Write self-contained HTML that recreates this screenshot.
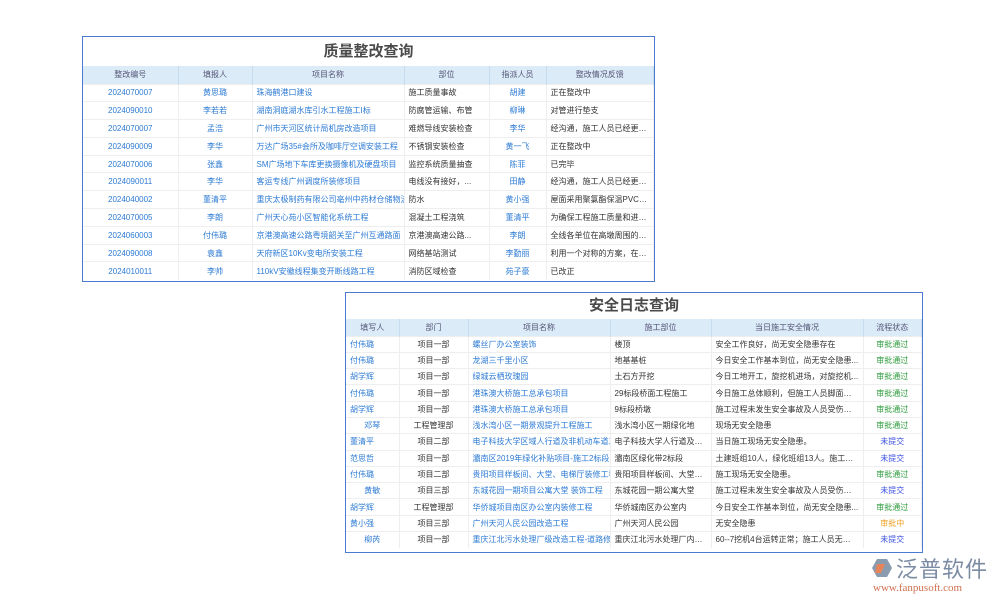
<!DOCTYPE html><html><head><meta charset="utf-8"><style>
body{margin:0;width:1000px;height:600px;background:#fff;position:relative;overflow:hidden;font-family:"Liberation Sans","Noto Sans CJK SC",sans-serif;}
.p{position:absolute;border:1px solid #4a7bd0;background:#fff;box-sizing:border-box;}
.t{text-align:center;font-weight:bold;color:#4a4a4a;font-size:15px;}
table{border-collapse:collapse;table-layout:fixed;width:100%;font-size:8px;}
th{background:#dcebf8;color:#557;font-weight:normal;border-right:1px solid #c8dcef;}
td{border-right:1px solid #eee;border-top:1px solid #eee;white-space:nowrap;overflow:hidden;color:#333;padding:0 4px;}
td.e{text-overflow:ellipsis}
td.c{text-align:center}
.b{color:#2d7bd4}.g{color:#2a9a3a}.u{color:#3b50e0}.o{color:#f0a020}
</style></head><body>
<div class="p" style="left:82px;top:36px;width:573px;height:246px;">
<div class="t" style="height:29px;line-height:29px;">质量整改查询</div>
<table><colgroup><col style="width:95px"><col style="width:74px"><col style="width:152px"><col style="width:85px"><col style="width:57px"><col></colgroup>
<tr style="height:18px"><th>整改编号</th><th>填报人</th><th>项目名称</th><th>部位</th><th>指派人员</th><th>整改情况反馈</th></tr>
<tr style="height:17.8px"><td class="c b">2024070007</td><td class="c b">黄思璐</td><td class="b">珠海鹤港口建设</td><td>施工质量事故</td><td class="c b">胡建</td><td class="e">正在整改中</td></tr>
<tr style="height:17.8px"><td class="c b">2024090010</td><td class="c b">李若若</td><td class="b">湖南洞庭湖水库引水工程施工I标</td><td>防腐管运输、布管</td><td class="c b">柳琳</td><td class="e">对管进行垫支</td></tr>
<tr style="height:17.8px"><td class="c b">2024070007</td><td class="c b">孟浩</td><td class="b">广州市天河区统计局机房改造项目</td><td>难燃导线安装检查</td><td class="c b">李华</td><td class="e">经沟通，施工人员已经更换...</td></tr>
<tr style="height:17.8px"><td class="c b">2024090009</td><td class="c b">李华</td><td class="b">万达广场35#会所及咖啡厅空调安装工程</td><td>不锈钢安装检查</td><td class="c b">黄一飞</td><td class="e">正在整改中</td></tr>
<tr style="height:17.8px"><td class="c b">2024070006</td><td class="c b">张鑫</td><td class="b">SM广场地下车库更换摄像机及硬盘项目</td><td>监控系统质量抽查</td><td class="c b">陈菲</td><td class="e">已完毕</td></tr>
<tr style="height:17.8px"><td class="c b">2024090011</td><td class="c b">李华</td><td class="b">客运专线广州调度所装修项目</td><td>电线没有接好，...</td><td class="c b">田静</td><td class="e">经沟通，施工人员已经更换...</td></tr>
<tr style="height:17.8px"><td class="c b">2024040002</td><td class="c b">董清平</td><td class="b">重庆太极制药有限公司亳州中药材仓储物流</td><td>防水</td><td class="c b">黄小强</td><td class="e">屋面采用聚氯酯保温PVC卷...</td></tr>
<tr style="height:17.8px"><td class="c b">2024070005</td><td class="c b">李朗</td><td class="b">广州天心苑小区智能化系统工程</td><td>混凝土工程浇筑</td><td class="c b">董清平</td><td class="e">为确保工程施工质量和进度...</td></tr>
<tr style="height:17.8px"><td class="c b">2024060003</td><td class="c b">付伟璐</td><td class="b">京港澳高速公路粤境韶关至广州互通路面</td><td>京港澳高速公路...</td><td class="c b">李朗</td><td class="e">全线各单位在高墩周围的模...</td></tr>
<tr style="height:17.8px"><td class="c b">2024090008</td><td class="c b">袁鑫</td><td class="b">天府新区10Kv变电所安装工程</td><td>网络基站测试</td><td class="c b">李勤丽</td><td class="e">利用一个对称的方案，在数...</td></tr>
<tr style="height:17.8px"><td class="c b">2024010011</td><td class="c b">李帅</td><td class="b">110kV安徽线程集变开断线路工程</td><td>消防区域检查</td><td class="c b">苑子豪</td><td class="e">已改正</td></tr>
</table></div>

<div class="p" style="left:345px;top:292px;width:578px;height:261px;">
<div class="t" style="height:26px;line-height:26px;">安全日志查询</div>
<table><colgroup><col style="width:53px"><col style="width:69px"><col style="width:142px"><col style="width:101px"><col style="width:152px"><col></colgroup>
<tr style="height:17px"><th>填写人</th><th>部门</th><th>项目名称</th><th>施工部位</th><th>当日施工安全情况</th><th>流程状态</th></tr>
<tr style="height:16.3px"><td class="b">付伟璐</td><td class="c">项目一部</td><td class="b">螺丝厂办公室装饰</td><td class="e">楼顶</td><td class="e">安全工作良好，尚无安全隐患存在</td><td class="c g">审批通过</td></tr>
<tr style="height:16.3px"><td class="b">付伟璐</td><td class="c">项目一部</td><td class="b">龙湖三千里小区</td><td class="e">地基基桩</td><td class="e">今日安全工作基本到位，尚无安全隐患...</td><td class="c g">审批通过</td></tr>
<tr style="height:16.3px"><td class="b">胡学辉</td><td class="c">项目一部</td><td class="b">绿城云栖玫瑰园</td><td class="e">土石方开挖</td><td class="e">今日工地开工，旋挖机进场，对旋挖机...</td><td class="c g">审批通过</td></tr>
<tr style="height:16.3px"><td class="b">付伟璐</td><td class="c">项目一部</td><td class="b">港珠澳大桥施工总承包项目</td><td class="e">29标段桥面工程施工</td><td class="e">今日施工总体顺利，但施工人员脚面烫伤</td><td class="c g">审批通过</td></tr>
<tr style="height:16.3px"><td class="b">胡学辉</td><td class="c">项目一部</td><td class="b">港珠澳大桥施工总承包项目</td><td class="e">9标段桥墩</td><td class="e">施工过程未发生安全事故及人员受伤情况</td><td class="c g">审批通过</td></tr>
<tr style="height:16.3px"><td class="c b">邓琴</td><td class="c">工程管理部</td><td class="b">浅水湾小区一期景观提升工程施工</td><td class="e">浅水湾小区一期绿化地</td><td class="e">现场无安全隐患</td><td class="c g">审批通过</td></tr>
<tr style="height:16.3px"><td class="b">董清平</td><td class="c">项目二部</td><td class="b">电子科技大学区域人行道及非机动车道工程</td><td class="e">电子科技大学人行道及非...</td><td class="e">当日施工现场无安全隐患。</td><td class="c u">未提交</td></tr>
<tr style="height:16.3px"><td class="b">范思哲</td><td class="c">项目一部</td><td class="b">灞南区2019年绿化补贴项目-施工2标段</td><td class="e">灞南区绿化带2标段</td><td class="e">土建班组10人，绿化班组13人。施工现...</td><td class="c u">未提交</td></tr>
<tr style="height:16.3px"><td class="b">付伟璐</td><td class="c">项目二部</td><td class="b">贵阳项目样板间、大堂、电梯厅装修工程</td><td class="e">贵阳项目样板间、大堂、...</td><td class="e">施工现场无安全隐患。</td><td class="c g">审批通过</td></tr>
<tr style="height:16.3px"><td class="c b">黄敏</td><td class="c">项目三部</td><td class="b">东城花园一期项目公寓大堂 装饰工程</td><td class="e">东城花园一期公寓大堂</td><td class="e">施工过程未发生安全事故及人员受伤情况</td><td class="c u">未提交</td></tr>
<tr style="height:16.3px"><td class="b">胡学辉</td><td class="c">工程管理部</td><td class="b">华侨城项目南区办公室内装修工程</td><td class="e">华侨城南区办公室内</td><td class="e">今日安全工作基本到位，尚无安全隐患...</td><td class="c g">审批通过</td></tr>
<tr style="height:16.3px"><td class="b">黄小强</td><td class="c">项目三部</td><td class="b">广州天河人民公园改造工程</td><td class="e">广州天河人民公园</td><td class="e">无安全隐患</td><td class="c o">审批中</td></tr>
<tr style="height:16.3px"><td class="c b">柳芮</td><td class="c">项目一部</td><td class="b">重庆江北污水处理厂级改造工程-道路修复</td><td class="e">重庆江北污水处理厂内部...</td><td class="e">60--7挖机4台运转正常；施工人员无违章...</td><td class="c u">未提交</td></tr>
</table></div>

<div style="position:absolute;left:871px;top:558px;width:22px;height:20px;">
<svg width="22" height="20" viewBox="0 0 22 20"><path d="M6 1 L16 1 L21 10 L16 19 L6 19 L1 10 Z" fill="#8a9bb0"/><path d="M6 6 L14 6 L10 15 L4 15 Z" fill="#e8845a"/></svg></div>
<div style="position:absolute;left:896px;top:552px;font-size:22px;color:#7b8ba3;letter-spacing:1px;">泛普软件</div>
<div style="position:absolute;left:873px;top:582px;font-size:11px;color:#d07050;font-family:'Liberation Serif',serif;">www.fanpusoft.com</div>
</body></html>
